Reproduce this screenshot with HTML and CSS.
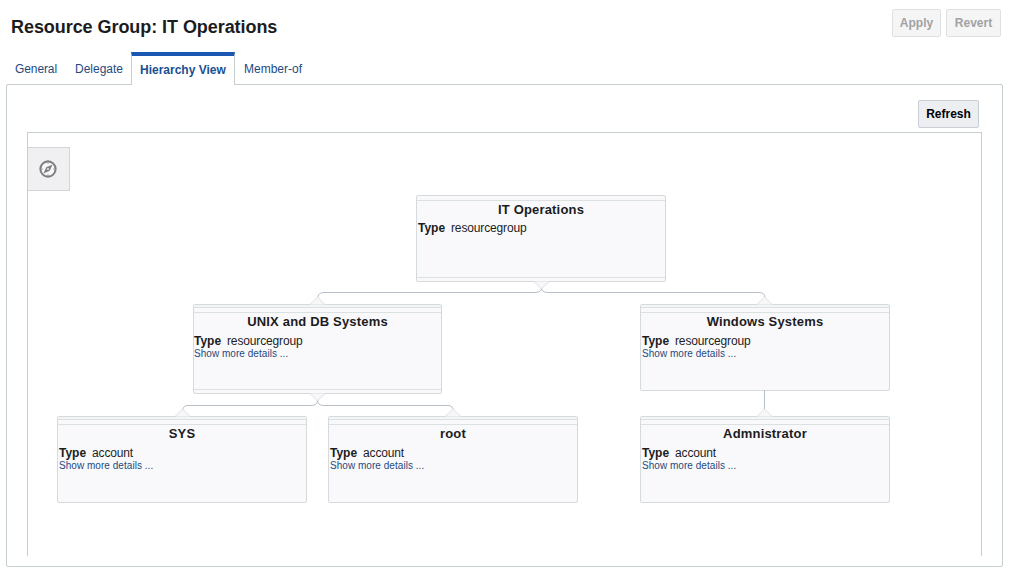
FILE: index.html
```
<!DOCTYPE html>
<html lang="en">
<head>
  <meta charset="UTF-8">
  <title>Resource Group: IT Operations</title>
  <link rel="stylesheet" href="styles.css">
</head>
<body>

<header class="page-header">
  <h1>Resource Group: IT Operations</h1>
  <div class="actions">
    <button class="btn apply" disabled>Apply</button>
    <button class="btn revert" disabled>Revert</button>
  </div>
</header>

<nav class="tabs">
  <a class="tab general">General</a>
  <a class="tab delegate">Delegate</a>
  <a class="tab active">Hierarchy View</a>
  <a class="tab member">Member-of</a>
</nav>

<main class="panel">
  <div class="toolbar">
    <button class="btn refresh">Refresh</button>
  </div>

  <div class="hierarchy">
    <button class="compass" aria-label="Control panel">
      <svg width="18" height="18" viewBox="0 0 18 18">
        <circle cx="9" cy="9" r="7.6" fill="#f7f7f8" stroke="#7f7f85" stroke-width="2.1"/>
        <path d="M13.600 4.400L10.700 10.700L4.400 13.600L7.300 7.300Z" fill="#7f7f85"/>
        <circle cx="9" cy="9" r="0.9" fill="#f7f7f8"/>
        <path d="M9 2.500V4M9 14V15.500M2.500 9H4M14 9H15.500" stroke="#a5a5aa"/>
      </svg>
    </button>

    <!-- Connectors -->
    <svg class="links" width="953" height="423" viewBox="0 0 953 423">
      <g class="lines">
        <path d="M513.500 155Q513.500 159.500 507 159.500H296Q290.500 159.500 290 164"/>
        <path d="M513.500 155Q513.500 159.500 520 159.500H731Q736.500 159.500 737 164"/>
        <path d="M289.500 267Q289.500 272.500 283 272.500H160Q155.500 272.500 154.500 277"/>
        <path d="M289.500 267Q289.500 272.500 296 272.500H420Q424.500 272.500 425.500 277"/>
        <path d="M736.500 257V276"/>
      </g>
      <g class="arrows">
        <path d="M506 148.500L513.500 156L521 148.500"/>
        <path d="M282 260.500L289.500 268L297 260.500"/>
        <path d="M282 171.500L289.500 164L297 171.500"/>
        <path d="M729 171.500L736.500 164L744 171.500"/>
        <path d="M147 283.500L154.500 276L162 283.500"/>
        <path d="M417 283.500L425 276L433 283.500"/>
        <path d="M729 283.500L736.500 276L744 283.500"/>
      </g>
    </svg>

    <div class="node top">
      <h2>IT Operations</h2>
      <p><b>Type</b><span>resourcegroup</span></p>
    </div>
    <div class="node child unix">
      <h2>UNIX and DB Systems</h2>
      <p><b>Type</b><span>resourcegroup</span></p>
      <a>Show more details ...</a>
    </div>
    <div class="node child windows">
      <h2>Windows Systems</h2>
      <p><b>Type</b><span>resourcegroup</span></p>
      <a>Show more details ...</a>
    </div>
    <div class="node child sys">
      <h2>SYS</h2>
      <p><b>Type</b><span>account</span></p>
      <a>Show more details ...</a>
    </div>
    <div class="node child root">
      <h2>root</h2>
      <p><b>Type</b><span>account</span></p>
      <a>Show more details ...</a>
    </div>
    <div class="node child admin">
      <h2>Admnistrator</h2>
      <p><b>Type</b><span>account</span></p>
      <a>Show more details ...</a>
    </div>
  </div>
</main>

</body>
</html>
```
FILE: styles.css
```
*,
*::before,
*::after {
  box-sizing: border-box;
}

body {
  margin: 0;
  height: 573px;
  overflow: hidden;
  background: #fff;
  font-family: "Liberation Sans", Arial, sans-serif;
  font-size: 12px;
  color: #1c1c1e;
}

.page-header {
  display: flex;
  justify-content: space-between;
  height: 52px;
  padding: 9px 9px 0 11px;
}

h1 {
  margin: 7px 0 0;
  font-size: 18px;
  line-height: 22px;
  letter-spacing: -0.06px;
  white-space: nowrap;
}

.actions {
  display: flex;
  gap: 5px;
}

.btn {
  height: 28px;
  padding: 0;
  border: 1px solid #c9cdd6;
  border-radius: 2px;
  background: #eceef2;
  font: bold 12px/26px "Liberation Sans", Arial, sans-serif;
  color: #000;
}

.btn:disabled {
  border-color: #dfe0e3;
  background: #f5f5f6;
  color: #a2a2a4;
}

.apply {
  width: 49px;
}

.revert {
  width: 55px;
}

.tabs {
  position: relative;
  z-index: 1;
  display: flex;
  height: 33px;
  padding-left: 6px;
}

.tab {
  padding-left: 9px;
  line-height: 34px;
  color: #1f4a80;
  white-space: nowrap;
}

.general {
  width: 60px;
  letter-spacing: -0.1px;
}

.delegate {
  width: 65px;
}

.tab.active {
  width: 104px;
  padding-left: 8px;
  border: 1px solid #c6cfcb;
  border-top: 4px solid #1b57b0;
  border-bottom: 0;
  background: #fff;
  font-weight: bold;
  line-height: 28px;
  color: #1b4f8f;
}

.panel {
  width: 997px;
  height: 483px;
  margin: -1px 0 0 6px;
  padding: 15px 20px 0;
  border: 1px solid #c6cfcb;
  border-radius: 2px;
}

.toolbar {
  display: flex;
  justify-content: flex-end;
  height: 32px;
  padding-right: 3px;
}

.refresh {
  width: 61px;
}

.hierarchy {
  position: relative;
  width: 955px;
  height: 424px;
  border: 1px solid #c6cfcb;
  border-bottom: 0;
}

.compass {
  display: flex;
  align-items: center;
  width: 42px;
  height: 44px;
  margin-top: 14px;
  padding: 0 0 0 11px;
  border: 1px solid #d5d3d8;
  border-left: 0;
  background: #f0eff2;
}

.links {
  position: absolute;
  left: 0;
  top: 0;
  z-index: 1;
  fill: none;
}

.lines path {
  stroke: #b9bfc6;
}

.arrows path {
  fill: #f7f7f9;
  stroke: #dde0e3;
}

/* Nodes on the diagram canvas */
.node {
  position: absolute;
  width: 250px;
  height: 87px;
  border: 1px solid #d5dadc;
  border-radius: 2px;
  background: #f9f9fb;
}

.node::before {
  content: "";
  display: block;
  height: 5px;
  border-bottom: 1px solid #dbe0e1;
}

.node.child::before {
  height: 8px;
  border-top: 2px solid #f3f5f6;
  box-shadow: inset 0 1px #dbe0e1;
}

.node h2 {
  margin: 0;
  font-size: 13px;
  line-height: 17px;
  letter-spacing: 0.18px;
  text-align: center;
}

.node p {
  margin: 3px 0 0 1px;
  font-size: 12px;
  line-height: 14px;
}

.node.child p {
  margin-top: 4px;
}

.node p b {
  display: inline-block;
  width: 33px;
}

.node p span {
  letter-spacing: -0.14px;
}

.node a {
  display: block;
  margin-left: 1px;
  font-size: 10px;
  line-height: 11px;
  letter-spacing: 0.04px;
  color: #1f4a80;
}

.top {
  left: 388px;
  top: 62px;
}

.unix {
  left: 165px;
  top: 171px;
  width: 249px;
  height: 90px;
}

.node.unix p,
.node.unix a {
  margin-left: 0;
}

.windows {
  left: 612px;
  top: 171px;
}

.sys {
  left: 29px;
  top: 283px;
}

.root {
  left: 300px;
  top: 283px;
}

.admin {
  left: 612px;
  top: 283px;
}

.top::after,
.unix::after {
  content: "";
  position: absolute;
  left: 0;
  right: 0;
  bottom: 0;
  height: 4px;
  border-top: 1px solid #dbe0e1;
}
```
